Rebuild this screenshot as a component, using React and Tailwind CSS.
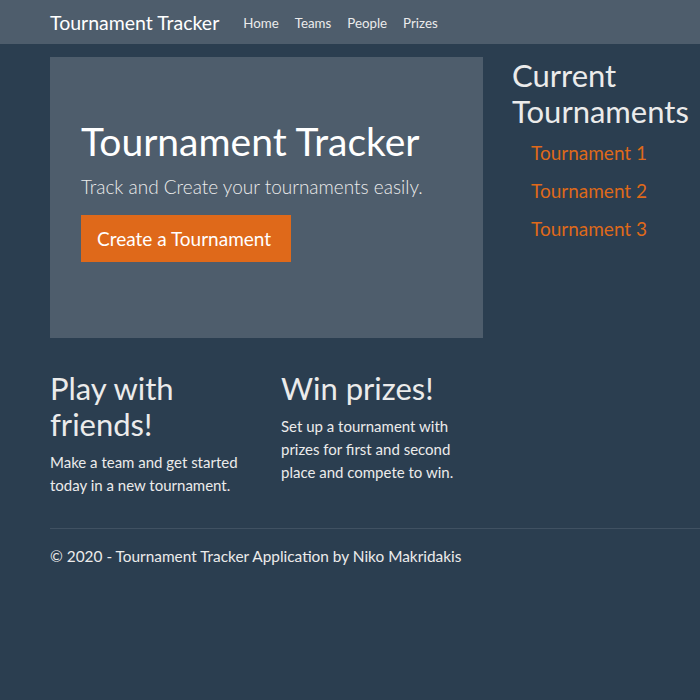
export default function App() {
  const links = ["Home", "Teams", "People", "Prizes"];
  const tournaments = ["Tournament 1", "Tournament 2", "Tournament 3"];

  return (
    <div className="min-h-[700px] bg-[#2b3e50] text-[#ebebeb] font-['Lato','Liberation_Sans',sans-serif]">
      <nav className="h-[44px] bg-[#4e5d6c] flex items-center px-[50px] pt-[2px]">
        <span className="text-[19.5px] text-white mr-[24px]">Tournament Tracker</span>
        <ul className="flex gap-[16px] text-[13.3px] text-[#ebebeb] pt-[2px]">
          {links.map((l) => (
            <li key={l}>{l}</li>
          ))}
        </ul>
      </nav>

      <main className="px-[50px] pt-[13px] flex">
        <div className="w-[433px] shrink-0">
          <section className="h-[281px] bg-[#4e5d6c] px-[31px] pt-[61px] mb-[32px]">
            <h1 className="text-[39px] leading-[1.2] text-white mb-[8px]">Tournament Tracker</h1>
            <p className="text-[19px] font-light leading-[1.5] mb-[14px]">
              Track and Create your tournaments easily.
            </p>
            <button className="bg-[#df691a] text-white text-[19px] h-[47px] px-[16px] w-[210px] text-left">
              Create a Tournament
            </button>
          </section>

          <div className="grid grid-cols-2 gap-x-[29px]">
            <div>
              <h2 className="text-[31px] leading-[36px] mb-[9px]">Play with friends!</h2>
              <p className="text-[15px] leading-[23px]">
                Make a team and get started today in a new tournament.
              </p>
            </div>
            <div>
              <h2 className="text-[31px] leading-[36px] mb-[9px]">Win prizes!</h2>
              <p className="text-[15px] leading-[23px]">
                Set up a tournament with prizes for first and second place and compete to win.
              </p>
            </div>
          </div>
        </div>

        <aside className="ml-[29px]">
          <h2 className="text-[31px] leading-[36px] mb-[5px]">Current Tournaments</h2>
          <ul className="pl-[19px]">
            {tournaments.map((t) => (
              <li key={t} className="h-[38px] flex items-center text-[19px] text-[#df691a]">
                {t}
              </li>
            ))}
          </ul>
        </aside>
      </main>

      <footer className="ml-[50px] mt-[31px] border-t border-white/10 pt-[16px]">
        <p className="text-[15.4px] leading-[23px]">
          © 2020 - Tournament Tracker Application by Niko Makridakis
        </p>
      </footer>
    </div>
  );
}
